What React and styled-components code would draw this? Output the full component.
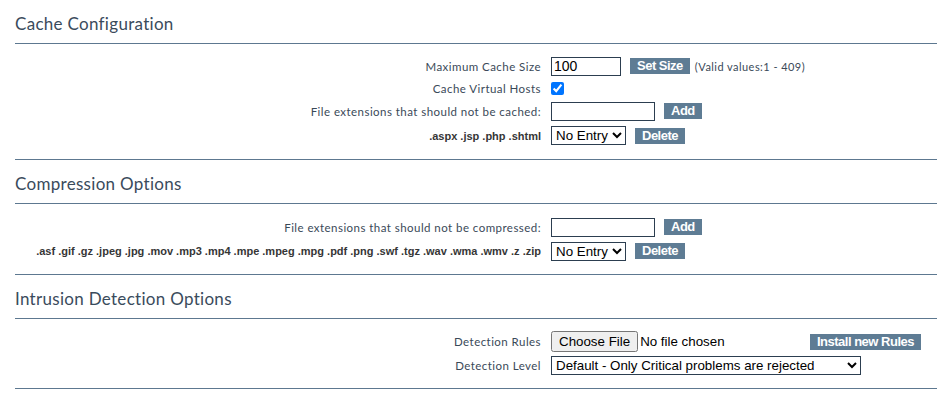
import React from 'react';
import styled, { createGlobalStyle } from 'styled-components';

const GlobalStyle = createGlobalStyle`
  body {
    margin: 0;
    background: #fff;
    font-family: 'Lato', 'Liberation Sans', sans-serif;
  }
`;

const Page = styled.div`
  padding: 0 0 0 15px;
`;

const SectionTitle = styled.div`
  padding: 15px 0 10px;
  font-size: 17px;
  line-height: 18px;
  letter-spacing: 0.3px;
  color: #3a4b5c;
  border-bottom: 1px solid #5d7890;
`;

const Rows = styled.div`
  padding: 11px 0;
  border-bottom: 1px solid #5d7890;
`;

const Row = styled.div`
  display: grid;
  grid-template-columns: 526px 1fr;
  column-gap: 10px;
  align-items: center;
  height: ${(p) => p.h || 24}px;
`;

const Label = styled.div`
  text-align: right;
  font-size: 11.5px;
  letter-spacing: 0.45px;
  color: #3a4958;
  white-space: nowrap;
`;

const ExtLabel = styled.div`
  text-align: right;
  font-family: 'Liberation Sans', Arial, sans-serif;
  font-weight: 700;
  font-size: 11px;
  color: #363636;
  white-space: nowrap;
`;

const Controls = styled.div`
  display: flex;
  align-items: center;
  gap: ${(p) => p.gap || 9}px;
`;

const TextInput = styled.input`
  box-sizing: border-box;
  width: ${(p) => p.w}px;
  height: 19px;
  margin: 0;
  padding: 0 2px;
  border: 1px solid #2c3e50;
  font-family: 'Liberation Sans', Arial, sans-serif;
  font-size: 14px;
  color: #000;
`;

const ActionButton = styled.button`
  height: 16px;
  margin: 0;
  padding: 0 7px;
  border: none;
  background: #5e7c94;
  color: #fff;
  font-family: 'Liberation Sans', Arial, sans-serif;
  font-weight: 700;
  font-size: 13px;
  letter-spacing: -0.5px;
  line-height: 16px;
`;

const Select = styled.select`
  box-sizing: border-box;
  width: ${(p) => p.w}px;
  height: 19px;
  margin: 0;
  padding: 0;
  border: 1px solid #2c3e50;
  border-radius: 0;
  background: #fff;
  font-family: 'Liberation Sans', Arial, sans-serif;
  font-size: 13.33px;
  color: #000;
`;

const Hint = styled.span`
  font-size: 11px;
  letter-spacing: 0.45px;
  color: #3a4958;
  margin-left: -4px;
`;

const Check = styled.input`
  margin: 0;
  width: 13px;
  height: 13px;
`;

const FileInput = styled.input`
  width: 253px;
  font-family: 'Liberation Sans', Arial, sans-serif;
  font-size: 13.33px;

  &::file-selector-button {
    font-family: 'Liberation Sans', Arial, sans-serif;
    font-size: 13.33px;
    margin-right: 2px;
  }
`;

export default function App() {
  return (
    <Page>
      <GlobalStyle />
      <SectionTitle>Cache Configuration</SectionTitle>
      <Rows>
        <Row h={22}>
          <Label>Maximum Cache Size</Label>
          <Controls>
            <TextInput w={70} defaultValue="100" />
            <ActionButton>Set Size</ActionButton>
            <Hint>(Valid values:1 - 409)</Hint>
          </Controls>
        </Row>
        <Row h={22}>
          <Label>Cache Virtual Hosts</Label>
          <Controls>
            <Check type="checkbox" defaultChecked />
          </Controls>
        </Row>
        <Row h={24}>
          <Label>File extensions that should not be cached:</Label>
          <Controls>
            <TextInput w={104} />
            <ActionButton>Add</ActionButton>
          </Controls>
        </Row>
        <Row h={25}>
          <ExtLabel>.aspx .jsp .php .shtml</ExtLabel>
          <Controls>
            <Select w={75}>
              <option>No Entry</option>
            </Select>
            <ActionButton>Delete</ActionButton>
          </Controls>
        </Row>
      </Rows>

      <SectionTitle>Compression Options</SectionTitle>
      <Rows>
        <Row h={24}>
          <Label>File extensions that should not be compressed:</Label>
          <Controls>
            <TextInput w={104} />
            <ActionButton>Add</ActionButton>
          </Controls>
        </Row>
        <Row h={24}>
          <ExtLabel>
            .asf .gif .gz .jpeg .jpg .mov .mp3 .mp4 .mpe .mpeg .mpg .pdf .png .swf .tgz .wav .wma .wmv .z .zip
          </ExtLabel>
          <Controls>
            <Select w={75}>
              <option>No Entry</option>
            </Select>
            <ActionButton>Delete</ActionButton>
          </Controls>
        </Row>
      </Rows>

      <SectionTitle>Intrusion Detection Options</SectionTitle>
      <Rows>
        <Row h={23}>
          <Label>Detection Rules</Label>
          <Controls gap={6}>
            <FileInput type="file" />
            <ActionButton>Install new Rules</ActionButton>
          </Controls>
        </Row>
        <Row h={24}>
          <Label>Detection Level</Label>
          <Controls>
            <Select w={310}>
              <option>Default - Only Critical problems are rejected</option>
            </Select>
          </Controls>
        </Row>
      </Rows>
    </Page>
  );
}
